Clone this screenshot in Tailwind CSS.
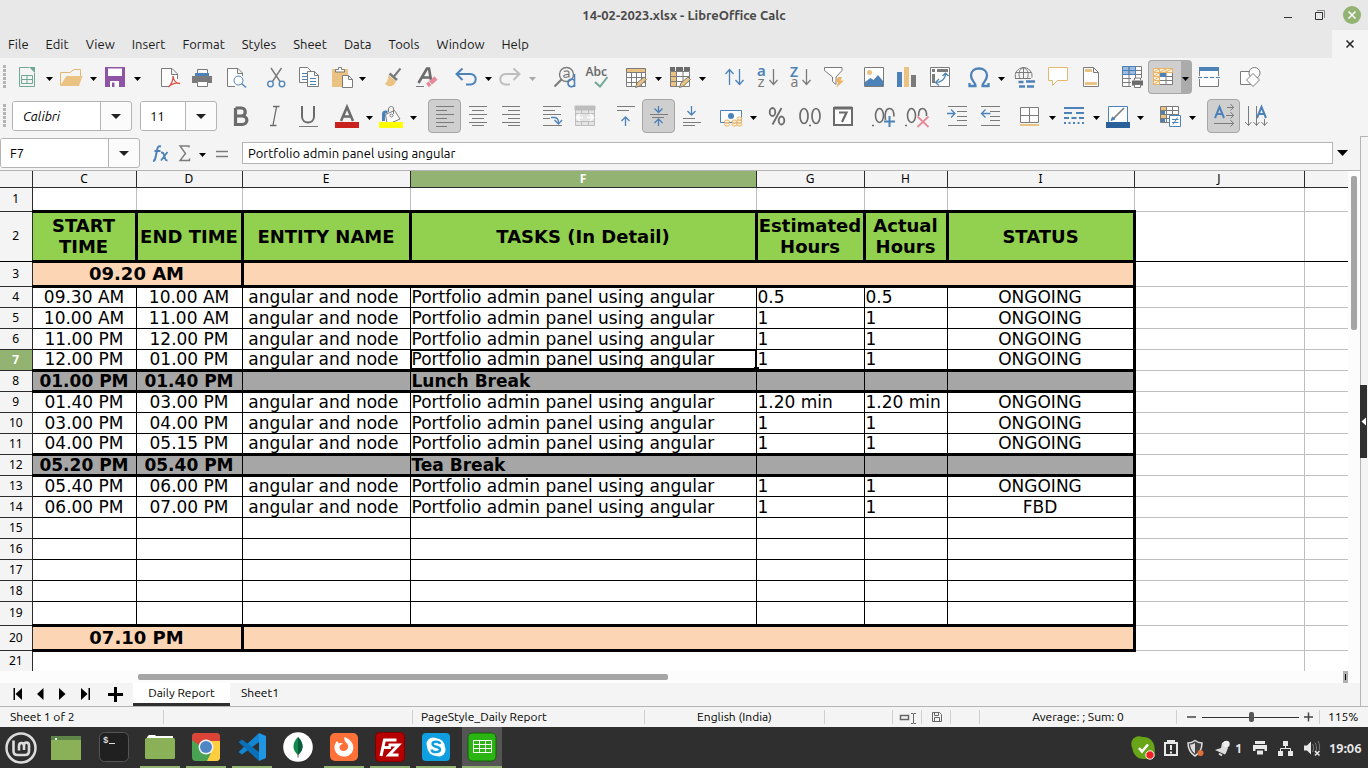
<!DOCTYPE html>
<html lang="en">
<head>
<meta charset="utf-8">
<title>14-02-2023.xlsx - LibreOffice Calc</title>
<script src="https://cdn.jsdelivr.net/npm/@tailwindcss/browser@4"></script>
</head>
<body class="flex h-screen flex-col overflow-hidden bg-[#f4f4f4] font-['Ubuntu','Noto_Sans',sans-serif] text-[12px] leading-4 text-[#1a1a1a]">
<svg class="hidden"><symbol id="dd" viewBox="0 0 11 34"><path d="M1 17H8L4.5 21Z" fill="#000" stroke="none"/></symbol></svg>

<header class="flex h-[30px] shrink-0 items-center bg-[#e8e8e8]">
  <div class="w-[90px]"></div>
  <h1 class="flex-1 text-center text-[13px] font-semibold text-[#4a4a4a]">14-02-2023.xlsx - LibreOffice Calc</h1>
  <div class="flex w-[90px] items-center">
    <button aria-label="Minimize" class="h-[30px] w-8"><svg class="h-[30px] w-8" viewBox="1278 0 32 30"><path d="M1284 17.500h8" stroke="#333"/></svg></button>
    <button aria-label="Restore" class="h-[30px] w-7"><svg class="h-[30px] w-7" viewBox="1310 0 28 30" fill="none"><path d="M1315.500 12.500h7v7h-7z" stroke="#333"/><path d="M1317 10.500h7.500v7.500" stroke="#888"/></svg></button>
    <button aria-label="Close" class="h-[30px] w-[30px]"><svg class="h-[30px] w-[30px]" viewBox="1338 0 30 30"><circle cx="1352" cy="15" r="9" fill="#92b372"/><path d="M1348.500 11.500l7 7m0-7l-7 7" stroke="#fff" stroke-width="1.500"/></svg></button>
  </div>
</header>

<nav class="flex h-7 shrink-0 items-center justify-between bg-[#e8e8e8]">
  <div class="flex gap-[17px] pl-2 text-[13px]">
    <button>File</button><button>Edit</button><button>View</button><button>Insert</button><button>Format</button><button>Styles</button><button>Sheet</button><button>Data</button><button>Tools</button><button>Window</button><button>Help</button>
  </div>
  <button aria-label="Close document" class="h-7 w-9 bg-[#f4f4f4]"><svg class="h-7 w-9" viewBox="1332 30 36 28"><path d="M1346.500 40.500l7 7m0-7l-7 7" stroke="#222" stroke-width="1.500"/></svg></button>
</nav>

<div role="toolbar" aria-label="Standard" class="flex h-[38px] shrink-0 items-start fill-none stroke-[#7b7b7b] pt-0.5 [&_button]:h-[34px] [&_button]:shrink-0 [&_svg]:h-[34px] [&_svg]:w-full">
  <div class="h-[34px] w-3 shrink-0"><svg viewBox="0 60 12 34"><path d="M4.500 65v23" stroke="#b5b5b5" stroke-width="3" stroke-dasharray="3 1"/></svg></div>
  <button aria-label="New" class="w-[33px]"><svg viewBox="12 60 33 34"><path d="M29 67.500H19.500V86.500H34.500V73M21.500 75.500h11v8h-11zM21.500 79.500h11M27 75.500v8" stroke="#6fa893"/><path d="M29 67h6v6z" fill="#6fa893" stroke="none"/></svg></button>
  <button aria-label="New options" class="w-[11px]"><svg><use href="#dd"/></svg></button>
  <button aria-label="Open" class="w-[33px]"><svg viewBox="56 60 33 34"><path d="M60.500 85V72.500H70L74 69.500H80.500V76" stroke="#e5b870"/><path d="M60 86L66.500 76H82.500L79 86z" fill="#eac282" stroke="none"/></svg></button>
  <button aria-label="Open options" class="w-[11px]"><svg><use href="#dd"/></svg></button>
  <button aria-label="Save" class="w-[33px]"><svg viewBox="100 60 33 34" stroke="none"><path d="M105 67h20v20h-20z" fill="#8e55a5"/><path d="M108 68.500h14V76h-14zM110 81h9v6h-9z" fill="#fff"/><path d="M112 82.500h2.500v4.500h-2.500z" fill="#8e55a5"/></svg></button>
  <button aria-label="Save options" class="w-[11px]"><svg><use href="#dd"/></svg></button>
  <div class="w-2 shrink-0"></div>
  <button aria-label="Export as PDF" class="w-[33px]"><svg viewBox="152 60 33 34"><path d="M170 86.500H161.500V68.500H172L177.500 74V79M171.500 68.500V74.500H177" fill="#fdfdfd"/><path d="M168.500 87C171 85 173.500 80 173 76C173.500 80 176 83.500 180 83.500C176 82.500 172 83.500 168.500 87z" stroke="#d9534a" stroke-width="1.300"/></svg></button>
  <button aria-label="Print" class="w-[33px]"><svg viewBox="185 60 33 34"><path d="M192 76h20v7h-20z" fill="#7b7b7b" stroke="none"/><path d="M197.500 69.500h10V75" fill="#fff"/><path d="M197.500 69.500V75" /><path d="M195 73h14v3h-14z" fill="#4d82b8" stroke="none"/><path d="M197.500 81.500h10v5h-10z" fill="#fff"/></svg></button>
  <button aria-label="Print preview" class="w-[33px]"><svg viewBox="218 60 33 34"><path d="M235 86.500H227.500V68.500H238L242.500 73V76M237.500 68.500V73.500H242" fill="#fdfdfd"/><circle cx="238.500" cy="80.500" r="4.500" stroke="#4d82b8" fill="#fdfdfd"/><path d="M241.500 83.500L246 87.500" stroke="#4d82b8" stroke-width="1.300"/></svg></button>
  <div class="w-2 shrink-0"></div>
  <button aria-label="Cut" class="w-[33px]"><svg viewBox="259 60 33 34"><path d="M271 68L280 81.500M281.500 68L272.500 81.500" stroke-width="1.400"/><g stroke="#4d82b8" stroke-width="1.300"><circle cx="270.500" cy="84" r="2.800"/><circle cx="282" cy="84" r="2.800"/></g></svg></button>
  <button aria-label="Copy" class="w-[33px]"><svg viewBox="292 60 33 34"><path d="M299.500 67.500h8l4 4V82.500h-12z" fill="#fdfdfd"/><path d="M302 73.500h5M302 76.500h5M302 79.500h5" stroke="#4d82b8"/><path d="M307.500 71.500h7l4 4V86.500h-11z" fill="#fdfdfd"/><path d="M314.500 71.500v4h4"/><path d="M310 78.500h6M310 81.500h6M310 84.500h6" stroke="#4d82b8"/></svg></button>
  <button aria-label="Paste" class="w-[33px]"><svg viewBox="325 60 33 34"><path d="M332 69h16v18h-16z" fill="#eac282" stroke="none"/><path d="M335.500 72v-2.500h3v-2h3v2h3V72z" fill="#fdfdfd"/><path d="M342.500 75.500h6l4 4v8h-10z" fill="#fdfdfd"/><path d="M348.500 75.500v4h4"/></svg></button>
  <button aria-label="Paste options" class="w-[11px]"><svg><use href="#dd"/></svg></button>
  <div class="w-2 shrink-0"></div>
  <button aria-label="Clone formatting" class="w-[33px]"><svg viewBox="377 60 33 34"><path d="M400.500 68.500L393.500 77" stroke-width="2"/><path d="M389.500 73.500L397 80" stroke-width="2.500"/><path d="M388.500 75L396 81.500C394.500 85 392 87 388 86L385 84C387 82 388.500 79 388.500 75z" fill="#eac282" stroke="none"/></svg></button>
  <button aria-label="Clear formatting" class="w-[33px]"><svg viewBox="410 60 33 34"><path d="M418.500 83L427 68.500H429L431 80M422 77.500H430" stroke-width="2.600" stroke="#6b6b6b"/><path d="M416 86.500h8"/><path d="M427.500 85.500L436 78" stroke="#e68a9a" stroke-width="4.500"/><path d="M429 81.500L432 85.500" stroke="#f4f4f4"/></svg></button>
  <div class="w-2 shrink-0"></div>
  <button aria-label="Undo" class="w-[33px]"><svg viewBox="451 60 33 34"><path d="M462.500 68.500L456.500 74L462.500 80M456.500 74H470.500A5.200 5.200 0 0 1 470.500 84.500H466" stroke="#4d82b8" stroke-width="1.900"/></svg></button>
  <button aria-label="Undo options" class="w-[11px]"><svg><use href="#dd"/></svg></button>
  <button aria-label="Redo" class="w-[33px]"><svg viewBox="495 60 33 34"><path d="M513.500 68.500L519.500 74L513.500 80M519.500 74H505.500A5.200 5.200 0 0 0 505.500 84.500H510" stroke="#bdbdbd" stroke-width="1.900"/></svg></button>
  <button aria-label="Redo options" class="w-[11px] opacity-30"><svg><use href="#dd"/></svg></button>
  <div class="w-2 shrink-0"></div>
  <button aria-label="Find and replace" class="w-[33px]"><svg viewBox="547 60 33 34"><circle cx="566.500" cy="74.500" r="7" stroke-width="1.400"/><path d="M561.500 79.500L554.500 86.500" stroke-width="2.200"/><path d="M564 72c1-1.500 5-2 5 1v4.500M569 74.500c-6 -.5-6.500 3-3.500 3 2 0 3.500-1.500 3.500-2.500" stroke-width="1.200"/><path d="M574.500 74V87M574.500 80.500c-1.500-2-6.500-2-6.500 2.500s5 4.500 6.500 2" stroke="#4d82b8" stroke-width="1.600"/></svg></button>
  <button aria-label="Spelling" class="w-[33px]"><svg viewBox="580 60 33 34"><text x="585.500" y="76" font-size="12" font-weight="600" fill="#6b6b6b" stroke="none" font-family="Noto Sans">Abc</text><path d="M595 82L600 86.500L607.500 77" stroke="#6fa893" stroke-width="2"/></svg></button>
  <div class="w-2 shrink-0"></div>
  <button aria-label="Row" class="w-[33px]"><svg viewBox="621 60 33 34"><path d="M626.500 72.500h19v14h-19zM626.500 77.500h19M626.500 82.500h19M631.500 72v14M636.500 72v14M641.500 72v14" fill="#fdfdfd"/><path d="M626.500 68.500h19v4h-19z" fill="#eac282"/><path d="M635.500 87.500l1.500-4.500 7-6 2.500 2.500-7 6.500z" fill="#eac282"/></svg></button>
  <button aria-label="Row options" class="w-[11px]"><svg><use href="#dd"/></svg></button>
  <button aria-label="Column" class="w-[33px]"><svg viewBox="665 60 33 34"><path d="M670.500 71.500h19v15h-19zM676.500 76.500h13M676.500 81.500h13M683 72v14" fill="#fdfdfd"/><path d="M670.500 71.500h6v15h-6zM670.500 76.500h6M670.500 81.500h6" fill="#eac282"/><path d="M670 67h5v4h-5zM676 67h7v4h-7zM684 67h6v4h-6z" fill="#6b6b6b" stroke="none"/><path d="M679.500 87.500l1.500-4.500 7-6 2.500 2.500-7 6.500z" fill="#eac282"/></svg></button>
  <button aria-label="Column options" class="w-[11px]"><svg><use href="#dd"/></svg></button>
  <div class="w-2 shrink-0"></div>
  <button aria-label="Sort" class="w-[33px]"><svg viewBox="717 60 33 34" stroke="#4d82b8" stroke-width="1.300"><path d="M729.500 85V69.500M725.500 74l4-4.500 4 4.500M739.500 69v15.500M735.500 80l4 4.500 4-4.500"/></svg></button>
  <button aria-label="Sort ascending" class="w-[33px]"><svg viewBox="750 60 33 34"><path d="M773.500 69v15.500M769.500 80l4 4.500 4-4.500" stroke-width="1.300"/><g font-family="Noto Sans" stroke="none" font-size="15"><text x="757" y="76" font-weight="600" fill="#4d82b8">a</text><text x="757.500" y="87" fill="#7b7b7b">z</text></g></svg></button>
  <button aria-label="Sort descending" class="w-[33px]"><svg viewBox="783 60 33 34"><path d="M806.500 69v15.500M802.500 80l4 4.500 4-4.500" stroke-width="1.300"/><g font-family="Noto Sans" stroke="none" font-size="14"><text x="790" y="77" font-weight="600" fill="#4d82b8">Z</text><text x="790.500" y="87" fill="#7b7b7b">a</text></g></svg></button>
  <button aria-label="AutoFilter" class="w-[33px]"><svg viewBox="816 60 33 34"><path d="M824.500 67.500h17.500v3l-6 6.500v7.500l-3.500-3v-4.500l-8-6.500z" fill="#fdfdfd"/><path d="M838 77h4l-1.500 3.500h3.500l-7.500 7 1.500-5.500h-2.500z" fill="#eab366" stroke="none"/></svg></button>
  <div class="w-2 shrink-0"></div>
  <button aria-label="Image" class="w-[33px]"><svg viewBox="857 60 33 34"><path d="M864.500 67.500h19v19h-19z" fill="#fff"/><circle cx="869.500" cy="72.500" r="2.500" fill="#eac282" stroke="none"/><path d="M865 86v-4l5.500-4 3 2 4.500-5 5 6v5z" fill="#4d82b8" stroke="none"/></svg></button>
  <button aria-label="Chart" class="w-[33px]"><svg viewBox="890 60 33 34" stroke="none"><path d="M897 72h5v15h-5z" fill="#4d82b8"/><path d="M904 67h5v20h-5z" fill="#eac282"/><path d="M911 75h5v12h-5z" fill="#7b7b7b"/></svg></button>
  <button aria-label="Pivot table" class="w-[33px]"><svg viewBox="923 60 33 34"><path d="M930.500 67.500h19v19h-19z" fill="#fdfdfd"/><path d="M932 69h3v3h-3zM937 69h11v3h-11zM932 74h3v9h-3z" fill="#7b7b7b" stroke="none"/><path d="M936 82.500C941 82.500 945.500 79 945.500 73.500M939 79l-3.500 3.500 3.500 3M942.500 76l3-3 3 3" stroke="#4d82b8" stroke-width="1.200"/></svg></button>
  <div class="w-2 shrink-0"></div>
  <button aria-label="Special character" class="w-[33px]"><svg viewBox="964 60 33 34"><path d="M969.500 83V86H975.500C975.500 82 971 81 971 75.500C971 71 974.500 68.500 979 68.500S987 71 987 75.500C987 81 982.500 82 982.500 86H988.500V83" stroke="#4d82b8" stroke-width="2.300"/></svg></button>
  <button aria-label="Special character options" class="w-[11px]"><svg><use href="#dd"/></svg></button>
  <button aria-label="Hyperlink" class="w-[33px]"><svg viewBox="1008 60 33 34"><path d="M1018 78.500H1015.500A8.500 8.500 0 1 1 1032 77.500M1023.500 67.500v11M1015.500 72.500h16M1020 78.500c-2-5-1-9 3.500-11c4.500 2 5.500 6 4 10.500M1015 78.500h16"/><path d="M1018.500 82h5M1019 86.500h6M1026 81.500h9M1027 86.500h7" stroke="#4d82b8" stroke-width="2.500"/></svg></button>
  <button aria-label="Comment" class="w-[33px]"><svg viewBox="1041 60 33 34"><path d="M1048.500 67.500h19v13h-10l-5 5v-5h-4z" fill="#fff" stroke="#e5b870"/></svg></button>
  <button aria-label="Headers and footers" class="w-[33px]"><svg viewBox="1074 60 33 34"><path d="M1083.500 67.500h10l5 5v14h-15zM1093.500 67.500v5h5" fill="#fdfdfd"/><path d="M1085 69h7v3h-7zM1085 82h12v3h-12z" fill="#eac282" stroke="none"/></svg></button>
  <div class="w-2 shrink-0"></div>
  <button aria-label="Print area" class="w-[33px]"><svg viewBox="1115 60 33 34"><path d="M1122.500 66.500h19v20h-19z" fill="#fff"/><path d="M1123 67h12v7h-12z" fill="#9dbbe0" stroke="none"/><path d="M1122.500 70.500h19M1122.500 74.500h19M1122.500 78.500h19M1122.500 82.500h19M1129 66v20M1135.500 66v20"/><path d="M1122.500 66.500h13v8h-13zM1122.500 70.500h13M1129 66v8" stroke="#4d82b8"/><path d="M1131 78h13v10h-13z" fill="#f4f4f4" stroke="none"/><path d="M1132 80.500h11v5h-11z" fill="#6b6b6b" stroke="none"/><path d="M1134.500 80v-2h6v2M1134.500 84.500h6v3h-6z" fill="#fff"/></svg></button>
  <button aria-label="Freeze rows and columns" class="w-[33px] rounded-l-sm border border-r-0 border-[#a6a6a6] bg-[#cfcfcf]"><svg class="-mt-px" viewBox="1149 60 32 34"><path d="M1153.500 68.500h19v16h-19z" fill="#fff"/><path d="M1159.500 72.500h13M1159.500 76.500h13M1159.500 80.500h13M1166 72v12"/><path d="M1153.500 68.500h19v4h-13v12h-6zM1153.500 72.500h6M1153.500 76.500h6M1153.500 80.500h6M1159.500 68.500v4M1166 68.500v4M1153.500 72l6-3M1160 72l6-3M1166 72l6-3M1154 76l5-3M1154 80l5-3M1154 84l5-3" fill="#fdf2dc" stroke="#eab366"/><path d="M1160 73h6v4h-6z" fill="#4d82b8" stroke="none"/></svg></button>
  <button aria-label="Freeze options" class="w-[11px] rounded-r-sm bg-[#ababab]"><svg><use href="#dd"/></svg></button>
  <button aria-label="Split window" class="w-[33px]"><svg viewBox="1192 60 33 34"><path d="M1199.500 67.500h19v19h-19z" fill="#fdfdfd"/><path d="M1199 67h20v4h-20z" fill="#4d82b8" stroke="none"/><path d="M1198 77.500h22" stroke="#f4f4f4" stroke-width="3"/><path d="M1198 77.500h22" stroke="#4d82b8" stroke-dasharray="4 2"/></svg></button>
  <div class="w-2 shrink-0"></div>
  <button aria-label="Draw functions" class="w-[33px]"><svg viewBox="1233 60 33 34"><path d="M1240.500 71.500h10v13h-10z" fill="#fdfdfd"/><circle cx="1254.500" cy="73" r="5.500" fill="#fdfdfd"/><path d="M1253 73.500l6.500 6.500-6.500 6.500-6.500-6.500z" fill="#fdfdfd"/></svg></button>
</div>

<div role="toolbar" aria-label="Formatting" class="flex h-10 shrink-0 items-start fill-none stroke-[#7b7b7b] pt-[3px] [&_svg]:h-[34px] [&_svg]:w-full">
  <div class="h-[34px] w-3 shrink-0"><svg viewBox="0 99 12 34"><path d="M4.500 104v23" stroke="#b5b5b5" stroke-width="3" stroke-dasharray="3 1"/></svg></div>
  <div class="mt-0.5 flex h-[30px] w-[120px] shrink-0 overflow-hidden rounded-[3px] border border-[#b4b4b4] bg-[#fbfbfb]">
    <input aria-label="Font name" value="Calibri" class="w-[88px] border-r border-[#b4b4b4] bg-white pl-2.5 text-[13px] italic text-black outline-none">
    <button aria-label="Font list" class="flex h-7 flex-1 items-center justify-center"><svg viewBox="0 0 30 34"><path d="M10 15h10l-5 5z" fill="#222" stroke="none"/></svg></button>
  </div>
  <div class="mt-0.5 ml-2 flex h-[30px] w-[77px] shrink-0 overflow-hidden rounded-[3px] border border-[#b4b4b4] bg-[#fbfbfb]">
    <input aria-label="Font size" value="11" class="w-[45px] border-r border-[#b4b4b4] bg-white pl-[9px] text-[13px] text-black outline-none">
    <button aria-label="Size list" class="flex h-7 flex-1 items-center justify-center"><svg viewBox="0 0 30 34"><path d="M10 15h10l-5 5z" fill="#222" stroke="none"/></svg></button>
  </div>
  <div class="flex pl-2 [&_button]:h-[34px] [&_button]:shrink-0">
  <button aria-label="Bold" class="w-[33px]"><svg viewBox="225 99 33 34"><path d="M235.500 108H241.500C246.500 108 246.500 116 241.500 116H236M236 116H242C248.500 116 248.500 124.500 242 124.500H235.500V108" stroke="#6b6b6b" stroke-width="3.200"/></svg></button>
  <button aria-label="Italic" class="w-[33px]"><svg viewBox="258 99 33 34"><path d="M273 106.500h6.500M270 125.500h6.500M276.500 107L273 125" stroke="#6b6b6b" stroke-width="1.300"/></svg></button>
  <button aria-label="Underline" class="w-[33px]"><svg viewBox="291 99 33 34"><path d="M302 106V116.500C302 124.500 314 124.500 314 116.500V106" stroke="#6b6b6b" stroke-width="2"/><path d="M299 126.500h19" /></svg></button>
  <div class="w-2 shrink-0"></div>
  <button aria-label="Font color" class="w-[33px]"><svg viewBox="332 99 33 34"><path d="M341 121L347 107L353 121M343 116.500h8" stroke="#6b6b6b" stroke-width="2.500"/><path d="M335 122h24v6h-24z" fill="#c9211e" stroke="none"/></svg></button>
  <button aria-label="Font color options" class="w-[11px]"><svg><use href="#dd"/></svg></button>
  <button aria-label="Background color" class="w-[33px]"><svg viewBox="376 99 33 34"><path d="M388.500 112v-3c0-3 5-3.500 5-.5v6"/><path d="M383.500 121v-7.500c0-2 2-1.500 4-1.500" stroke="#4d82b8" stroke-width="3"/><path d="M385.500 114.500l9-4 5.500 8.500-9 4h-4z" fill="#fdfdfd"/><path d="M393.500 108v6"/><circle cx="391.500" cy="115.500" r="1.500"/><path d="M379 122h24v6h-24z" fill="#ff0" stroke="none"/></svg></button>
  <button aria-label="Background color options" class="w-[11px]"><svg><use href="#dd"/></svg></button>
  <div class="w-2 shrink-0"></div>
  <button aria-label="Align left" class="w-[33px] rounded-sm border border-[#a6a6a6] bg-[#cfcfcf]"><svg class="-mt-px" viewBox="429 99 31 34"><path d="M436 106.500h18M436 110.500h11M436 114.500h18M436 118.500h11M436 122.500h18M436 126.500h11"/></svg></button>
  <button aria-label="Align center" class="w-[33px]"><svg viewBox="461 99 33 34"><path d="M469 106.500h18M472 110.500h12M469 114.500h18M472 118.500h12M469 122.500h18M472 125.500h12"/></svg></button>
  <button aria-label="Align right" class="w-[33px]"><svg viewBox="494 99 33 34"><path d="M502 106.500h18M508 110.500h12M502 114.500h18M508 118.500h12M502 122.500h18M508 125.500h12"/></svg></button>
  <div class="w-2 shrink-0"></div>
  <button aria-label="Wrap text" class="w-[33px]"><svg viewBox="535 99 33 34"><path d="M543 106.500h18M543 110.500h12M543 114.500h18M543 118.500h7M543 125.500h19"/><path d="M551 117.500h3c3 0 4.500 2 4.500 5M554.500 120l4 4 3.500-4" stroke="#4d82b8" stroke-width="1.300"/></svg></button>
  <button aria-label="Merge cells" class="w-[33px]"><svg viewBox="568 99 33 34" stroke="#bdbdbd"><path d="M575.500 106.500h19v19h-19z" fill="#e4e4e4"/><path d="M575 106h20v4h-20z" fill="#bdbdbd"/><path d="M575.500 113.500h19M575.500 121.500h19M581.500 110v4M588.500 110v4M581.500 121v4M588.500 121v4"/><path d="M583 117.500h-6M580 114l-3.500 3.500 3.500 3.500M587 117.500h6M590 114l3.500 3.500-3.500 3.500" stroke="#fff" stroke-width="1.500"/></svg></button>
  <div class="w-2 shrink-0"></div>
  <button aria-label="Align top" class="w-[33px]"><svg viewBox="609 99 33 34"><path d="M617 106.500h18M617 110.500h12"/><path d="M625.500 126v-9M621.500 121l4-4 4 4" stroke="#4d82b8" stroke-width="1.300"/></svg></button>
  <button aria-label="Center vertically" class="w-[33px] rounded-sm border border-[#a6a6a6] bg-[#cfcfcf]"><svg class="-mt-px" viewBox="643 99 31 34"><path d="M650 114.500h18M652 117.500h12"/><path d="M658.500 106v6M654.500 108.500l4 4 4-4M658.500 126v-7M654.500 123l4-4 4 4" stroke="#4d82b8" stroke-width="1.300"/></svg></button>
  <button aria-label="Align bottom" class="w-[33px]"><svg viewBox="675 99 33 34"><path d="M683 118.500h12M683 122.500h18M683 125.500h12"/><path d="M691.500 106v9M687.500 111l4 4 4-4" stroke="#4d82b8" stroke-width="1.300"/></svg></button>
  <div class="w-2 shrink-0"></div>
  <button aria-label="Currency" class="w-[33px]"><svg viewBox="716 99 33 34"><path d="M720.500 110.500h21v12h-21z" fill="#fdfdfd" stroke="#4d82b8"/><circle cx="731" cy="116" r="3" fill="#4d82b8" stroke="none"/><g stroke="#eab366" fill="#fdf2dc"><ellipse cx="727" cy="121.500" rx="2.500" ry="1.500"/><ellipse cx="727" cy="124.500" rx="2.500" ry="1.500"/><ellipse cx="734.500" cy="124.500" rx="2.500" ry="1.500"/><ellipse cx="734.500" cy="121.500" rx="2.500" ry="1.500"/><ellipse cx="739.500" cy="124.500" rx="2.500" ry="1.500"/><ellipse cx="739.500" cy="121.500" rx="2.500" ry="1.500"/><ellipse cx="739.500" cy="118.500" rx="2.500" ry="1.500"/></g></svg></button>
  <button aria-label="Currency options" class="w-[11px]"><svg><use href="#dd"/></svg></button>
  <button aria-label="Percent" class="w-[33px]"><svg viewBox="760 99 33 34" stroke="#6b6b6b" stroke-width="1.800"><ellipse cx="772.500" cy="112" rx="2.800" ry="4"/><ellipse cx="781.500" cy="120.500" rx="2.800" ry="4"/><path d="M781.500 108L772.500 124.500"/></svg></button>
  <button aria-label="Number" class="w-[33px]"><svg viewBox="793 99 33 34" stroke="#6b6b6b" stroke-width="1.700"><ellipse cx="804" cy="116" rx="4" ry="7.500"/><ellipse cx="816" cy="116" rx="4" ry="7.500"/><path d="M809 125.500h2"/></svg></button>
  <button aria-label="Date" class="w-[33px]"><svg viewBox="826 99 33 34" stroke="#6b6b6b" stroke-width="2"><path d="M834 108h18v17h-18z" fill="#fdfdfd"/><path d="M834 108h18" stroke-width="3"/><path d="M839 112.500h7.500l-4.500 9.500" stroke-width="2.200"/></svg></button>
  <div class="w-2 shrink-0"></div>
  <button aria-label="Add decimal place" class="w-[33px]"><svg viewBox="867 99 33 34" stroke="#6b6b6b" stroke-width="1.600"><path d="M872 125.500h2"/><ellipse cx="879.500" cy="115.500" rx="4" ry="7"/><path d="M885.500 120c-1-6 0-11.500 4-11.500s4.500 4 4.500 8"/><path d="M884 121.500h11M889.500 116v11" stroke="#4d82b8" stroke-width="2"/></svg></button>
  <button aria-label="Delete decimal place" class="w-[33px]"><svg viewBox="900 99 33 34" stroke="#6b6b6b" stroke-width="1.600"><path d="M905 125.500h2"/><ellipse cx="911.500" cy="115.500" rx="4" ry="7"/><path d="M918.500 116c0-4 1-7.500 4-7.500s4.500 4 4 7.500"/><path d="M917.500 116.500l11 10.500M928.500 116.500l-11 10.500" stroke="#e68a9a" stroke-width="1.800"/></svg></button>
  <div class="w-2 shrink-0"></div>
  <button aria-label="Increase indent" class="w-[33px]"><svg viewBox="941 99 33 34"><path d="M948 106.500h19M957 111.500h10M957 116.500h10M957 120.500h10M948 125.500h19"/><path d="M947 113.500h8M951 109.500l4 4-4 4" stroke="#4d82b8" stroke-width="1.300"/></svg></button>
  <button aria-label="Decrease indent" class="w-[33px]"><svg viewBox="974 99 33 34"><path d="M981 106.500h19M990 111.500h10M990 116.500h10M990 120.500h10M981 125.500h19"/><path d="M981.500 113.500h9M985.500 109.500l-4 4 4 4" stroke="#4d82b8" stroke-width="1.300"/></svg></button>
  <div class="w-2 shrink-0"></div>
  <button aria-label="Borders" class="w-[33px]"><svg viewBox="1015 99 33 34"><path d="M1020.500 107.500h18v15h-18zM1020.500 115.500h18M1029.500 107.500v15" fill="#fdfdfd"/><path d="M1020 125h19" stroke="#eac282" stroke-width="2"/></svg></button>
  <button aria-label="Border options" class="w-[11px]"><svg><use href="#dd"/></svg></button>
  <button aria-label="Border style" class="w-[33px]"><svg viewBox="1059 99 33 34" stroke="#4d82b8" stroke-width="2"><path d="M1064 108h20"/><path d="M1064 113h20" stroke-dasharray="8 4"/><path d="M1064 118h20" stroke-dasharray="5 2.500"/><path d="M1064 123h20" stroke-dasharray="2 2.500"/></svg></button>
  <button aria-label="Border style options" class="w-[11px]"><svg><use href="#dd"/></svg></button>
  <button aria-label="Border color" class="w-[33px]"><svg viewBox="1103 99 33 34"><path d="M1108.500 106.500h19v16h-19z" fill="#fdfdfd" stroke="#4d82b8"/><path d="M1111 120.500l4-1.500-2.500-2z" fill="#4d82b8" stroke="#4d82b8"/><path d="M1114 118L1124 108" stroke-width="1.600"/><path d="M1106 122h24v6h-24z" fill="#2a6099" stroke="none"/></svg></button>
  <button aria-label="Border color options" class="w-[11px]"><svg><use href="#dd"/></svg></button>
  <div class="w-2 shrink-0"></div>
  <button aria-label="Conditional formatting" class="w-[33px]"><svg viewBox="1155 99 33 34"><path d="M1160.500 106.500h18v16h-18zM1160.500 110.500h18M1160.500 114.500h18M1160.500 118.500h18M1166.500 106v16M1172.500 106v16" fill="#fdfdfd"/><path d="M1161 107h5v3h-5zM1161 115h5v3h-5z" fill="#eac282" stroke="none"/><path d="M1161 111h4v3h-4zM1161 119h4v3h-4z" fill="#4d82b8" stroke="none"/><path d="M1169.500 115.500h11v11h-11z" fill="#fff" stroke="#4d82b8"/><path d="M1172 119.500h6.500M1172 122.500h6.500M1177.500 117.500l-4.500 7" stroke="#4d82b8"/></svg></button>
  <button aria-label="Conditional options" class="w-[11px]"><svg><use href="#dd"/></svg></button>
  <div class="w-2 shrink-0"></div>
  <button aria-label="Text left to right" class="w-[33px] rounded-sm border border-[#a6a6a6] bg-[#cfcfcf]"><svg class="-mt-px" viewBox="1208 99 31 34"><path d="M1215 118L1219.500 107L1224 118M1216.500 114h6" stroke="#4d82b8" stroke-width="2"/><path d="M1227 107.500h6.500M1230.500 104l3 3.500-3 3M1226 115.500h7.500M1230.500 112l3 3.500-3 3M1214 123.500h19.500M1230.500 120l3 3.500-3 3"/></svg></button>
  <button aria-label="Text top to bottom" class="w-[33px]"><svg viewBox="1240 99 33 34"><path d="M1257 118L1261.500 107L1266 118M1258.500 114h6" stroke="#4d82b8" stroke-width="2"/><path d="M1248.500 106v19.500M1245 122l3.500 3.500 3-3.500M1256.500 106v19.500M1253.500 122l3 3.500 3-3.500M1264.500 119v6.500M1261.500 122l3 3.500 3-3.500"/></svg></button>
  </div>
</div>

<main class="flex min-h-0 flex-1">
  <section class="flex min-w-0 flex-1 flex-col">
    <div class="flex h-[34px] shrink-0 items-center">
      <div class="flex h-[30px] w-[140px] shrink-0 overflow-hidden rounded-[3px] border border-[#b4b4b4] bg-[#fbfbfb]">
        <input aria-label="Name box" value="F7" class="w-[108px] border-r border-[#b4b4b4] bg-white pl-[9px] text-[13px] text-black outline-none">
        <button aria-label="Name list" class="flex-1"><svg class="h-7 w-full" viewBox="0 0 30 28"><path d="M10 12h10l-5 5z" fill="#222"/></svg></button>
      </div>
      <button aria-label="Function wizard" class="ml-2 w-6"><svg class="h-[34px] w-6" viewBox="148 136 24 34" fill="none" stroke="#4d82b8" stroke-width="2"><path d="M161 146.500c-3-1-3.500 1-4 4l-1.500 7c-.5 2.500-1 3.500-2.500 3.500M154.500 151h6"/><path d="M161 152.500c2 0 2.500 0 3.500 4s1.500 4 3 4M167.500 152l-6.500 8.500" stroke-width="1.800"/></svg></button>
      <button aria-label="Select function" class="w-9"><svg class="h-[34px] w-9" viewBox="172 136 36 34"><path d="M189 147.500V146H180l5.500 7.500-5.500 7h9.500V158.500" fill="none" stroke="#7b7b7b" stroke-width="1.400"/><path d="M199 153h7l-3.500 4z"/></svg></button>
      <button aria-label="Formula" class="w-7"><svg class="h-[34px] w-7" viewBox="208 136 28 34"><path d="M216 151.500h12M216 156.500h12" stroke="#7b7b7b" stroke-width="1.500"/></svg></button>
      <input aria-label="Input line" value="Portfolio admin panel using angular" class="ml-1.5 h-[22px] min-w-0 flex-1 border border-[#b4b4b4] bg-white pl-[5px] text-[13px] text-black outline-none">
      <button aria-label="Expand formula bar" class="w-[27px]"><svg class="h-[34px] w-[27px]" viewBox="1333 136 27 34"><path d="M1337 150h11l-5.500 6z"/></svg></button>
    </div>
    <div class="flex min-h-0 flex-1 border-t border-[#b4b4b4]">
      <div class="min-w-0 flex-1 overflow-hidden bg-white">
        <table class="w-full table-fixed border-collapse font-['DejaVu_Sans',sans-serif] text-[17px] leading-[18px] text-black">
          <colgroup><col class="w-[32px]"><col class="w-[104px]"><col class="w-[106px]"><col class="w-[168px]"><col class="w-[346px]"><col class="w-[108px]"><col class="w-[83px]"><col class="w-[187px]"><col class="w-[170px]"><col></colgroup>
          <thead id="cols"></thead>
          <tbody id="rows"></tbody>
        </table>
      </div>
      <div class="w-3 shrink-0 bg-[#fcfcfc] pt-[5px] pl-[3px]"><div class="h-[154px] w-1.5 rounded-[2px] bg-[#a5a5a5]"></div></div>
    </div>
    <div class="flex h-3 shrink-0 items-center justify-between bg-[#fcfcfc] pr-3 pl-[138px]">
      <div class="h-1.5 w-[530px] rounded-[2px] bg-[#a5a5a5]"></div>
      <div class="flex h-3 w-[5px] items-center justify-center bg-[#b0b0b0]"><div class="h-1.5 w-px bg-black"></div></div>
    </div>
    <div class="flex h-[23px] shrink-0 items-stretch">
      <button aria-label="First sheet" class="w-7"><svg class="h-[23px] w-7" viewBox="0 683 28 23"><path d="M13.500 688h1.500v12h-1.500zM22 688v12l-6.500-6z"/></svg></button>
      <button aria-label="Previous sheet" class="w-[22px]"><svg class="h-[23px] w-[22px]" viewBox="28 683 22 23"><path d="M43.500 688v12l-6.500-6z"/></svg></button>
      <button aria-label="Next sheet" class="w-[22px]"><svg class="h-[23px] w-[22px]" viewBox="50 683 22 23"><path d="M59 688v12l6.500-6z"/></svg></button>
      <button aria-label="Last sheet" class="w-6"><svg class="h-[23px] w-6" viewBox="72 683 24 23"><path d="M81 688v12l6.500-6zM88.500 688h1.500v12h-1.500z"/></svg></button>
      <button aria-label="Add sheet" class="w-[37px]"><svg class="h-[23px] w-[37px]" viewBox="96 683 37 23"><path d="M108 694.500h15M115.500 687v15" stroke="#000" stroke-width="3"/></svg></button>
      <button class="w-[97px] border-b-[3px] border-[#303030] bg-white text-[12px] text-black">Daily Report</button>
      <button class="w-[60px] border-b-[3px] border-transparent text-[12px] text-black">Sheet1</button>
    </div>
  </section>
  <aside class="flex w-2 shrink-0 flex-col justify-center border-t border-l border-[#b4b4b4] pb-px">
    <button aria-label="Show sidebar" class="-ml-px h-[73px] w-[7px] bg-[#303030]"><svg class="h-[73px] w-[7px]" viewBox="0 0 7 73"><path d="M6 32.500v8l-4.500-4z" fill="#fff"/></svg></button>
  </aside>
</main>

<footer class="flex h-[21px] shrink-0 items-center border-t border-[#b4b4b4] text-[12px] text-black [&>*]:h-[14px] [&>*]:shrink-0 [&>*]:border-[#d0d0d0] [&>*]:leading-[14px]">
  <div class="w-[164px] border-r pl-2.5">Sheet 1 of 2</div>
  <div class="w-[249px] border-r"></div>
  <div class="w-[232px] border-r pl-2">PageStyle_Daily Report</div>
  <div class="w-[180px] border-r text-center">English (India)</div>
  <div class="w-[68px] border-r"></div>
  <div class="w-[29px] border-r"><svg class="h-[14px] w-7" viewBox="893 710 28 14" fill="none" stroke="#666"><path d="M900.500 715.500h8v4h-8z" stroke-width="1.500"/><path d="M911 713.500h2l.5 .5 .5-.5h2M913.500 714v9M911 723.500h2l.5-.5.5.5h2"/></svg></div>
  <div class="w-[29px] border-r"><svg class="h-[14px] w-7" viewBox="922 710 28 14" fill="none" stroke="#666"><path d="M932.500 712.500h7l2 2v7h-9zM934.500 712.500v3h4v-3M934.500 721.500v-4h5v4"/></svg></div>
  <div class="w-[29px] border-r"></div>
  <div class="min-w-0 flex-1 border-r text-center">Average: ; Sum: 0</div>
  <div class="flex w-[143px] items-center border-r pl-[9px]">
    <button aria-label="Zoom out" class="w-4"><svg class="h-[14px] w-4" viewBox="0 0 16 14"><path d="M1 7h9" stroke="#444" stroke-width="1.500"/></svg></button>
    <input aria-label="Zoom" type="range" value="51" class="h-[14px] w-[97px] appearance-none bg-transparent [&::-webkit-slider-runnable-track]:h-px [&::-webkit-slider-runnable-track]:bg-[#333] [&::-webkit-slider-thumb]:-mt-[5px] [&::-webkit-slider-thumb]:h-[10px] [&::-webkit-slider-thumb]:w-[5px] [&::-webkit-slider-thumb]:appearance-none [&::-webkit-slider-thumb]:rounded-[2px] [&::-webkit-slider-thumb]:bg-[#555]">
    <button aria-label="Zoom in" class="w-5"><svg class="h-[14px] w-5" viewBox="0 0 20 14"><path d="M5 7h9M9.500 2.500v9" stroke="#444" stroke-width="1.500"/></svg></button>
  </div>
  <div class="w-12 pl-2">115%</div>
</footer>

<div class="flex h-[41px] shrink-0 bg-[#2f2f2f] text-[#e8e8e8]">
  <button aria-label="Menu" class="w-[46px]"><svg class="h-[41px] w-[46px]" viewBox="0 727 46 41" fill="none" stroke="#dcdcdc"><circle cx="21" cy="748" r="14.500" stroke-width="2.500"/><path d="M13.500 740.500v10.500c0 3 1.500 4 4 4h7.500c3 0 4-1.500 4-4v-5.500c0-4-5-4-5 0v4.500M24 746c0-4-5-4-5 0v4.500" stroke-width="2.600"/></svg></button>
  <button aria-label="Show desktop" class="w-10"><svg class="h-[41px] w-10" viewBox="46 727 40 41"><path d="M51 736h30v24h-30z" fill="#8bb158"/><path d="M51 736h30v4h-30z" fill="#5f8447"/><path d="M55 738h2v2h-2z" fill="#dfe"/></svg></button>
  <button aria-label="Terminal" class="ml-2 w-10"><svg class="h-[41px] w-10" viewBox="94 727 40 41"><rect x="99.500" y="732.500" width="29" height="29" rx="5" fill="#202020" stroke="#555"/><text x="103" y="743" font-size="9" font-weight="bold" fill="#ddd" font-family="Liberation Mono">$</text><path d="M109 743.500h6" stroke="#ddd"/></svg></button>
  <div class="ml-1.5 flex gap-1.5 [&>button]:w-10 [&>button]:border-b-2 [&>button]:border-transparent [&_svg]:h-[39px] [&_svg]:w-10">
    <button aria-label="Files" class="!border-[#92b372]"><svg viewBox="140 727 40 39"><path d="M147 737l2-2h6l1 1h17v6h-26z" fill="#fff"/><rect x="145" y="738" width="30" height="21" rx="1.500" fill="#8bb158"/></svg></button>
    <button aria-label="Chrome" class="!border-[#92b372]"><svg viewBox="186 727 40 39"><rect x="192" y="733" width="28" height="28" rx="4" fill="#4aa352"/><path d="M192 740v-3a4 4 0 0 1 4-4h20a4 4 0 0 1 4 4v4h-14l-7 4z" fill="#dc4437"/><path d="M220 741h-14l5 12-4 8h9a4 4 0 0 0 4-4z" fill="#ffcd40"/><circle cx="206" cy="747" r="7.500" fill="#f3f3f3"/><circle cx="206" cy="747" r="6" fill="#4f86c6"/></svg></button>
    <button aria-label="Visual Studio Code" class="!border-[#92b372]"><svg viewBox="232 727 40 39"><path d="M259 733l7 3v22l-7 3z" fill="#2196e3"/><path d="M259 733v9l-17 12.500-3.500-2.500z" fill="#1286d0"/><path d="M259 761v-9l-17-12.500-3.500 2.500z" fill="#0a70b8"/></svg></button>
    <button aria-label="MongoDB"><svg viewBox="278 727 40 39"><circle cx="298" cy="747" r="14.800" fill="#fff"/><path d="M298 737c7 7 5 14 0 18c-5-4-7-11 0-18z" fill="#128a4e"/><path d="M298 737c7 7 5 14 0 18z" fill="#0b5c3c"/><path d="M298 754v3.500" stroke="#555"/></svg></button>
    <button aria-label="Firefox" class="!border-[#92b372]"><svg viewBox="324 727 40 39"><rect x="330" y="733" width="28" height="28" rx="5" fill="#ff7139"/><path d="M344.500 737c7 3 10 8 8.500 13s-6 7-10 6.500c-6-.5-9-6-8.500-10.500c.5-2 1.500-4 2.500-5l2 2.500c2-.8 3-.5 4 .5c-2 0-3.500 1.500-3.500 3.500c0 3 3.500 4.500 6 3c4-2 3-6 .5-8c-1.500-1.500-2-3.500-1.500-5.500z" fill="#fff"/></svg></button>
    <button aria-label="FileZilla" class="!border-[#92b372]"><svg viewBox="370 727 40 39"><rect x="375.500" y="732.500" width="29" height="29" rx="4" fill="#b50000" stroke="#7c0000"/><path d="M381 756l3.500-16h12M383.500 747.500h7.500M388.500 745h10l-9.500 10h9.500" fill="none" stroke="#fff" stroke-width="3"/></svg></button>
    <button aria-label="Skype" class="!border-[#92b372]"><svg viewBox="416 727 40 39"><rect x="422" y="733" width="28" height="28" rx="4" fill="#0f9fe0"/><circle cx="433" cy="744" r="6.500" fill="#fff"/><circle cx="439" cy="750" r="6.500" fill="#fff"/><circle cx="436" cy="747" r="8.800" fill="#fff"/><path d="M440 744c-.5-3-7.500-3-7.500 0c0 3.500 7.500 2 7.500 5.500c0 3.500-8 3.500-8.500 0" fill="none" stroke="#0f9fe0" stroke-width="2.400"/></svg></button>
    <button aria-label="LibreOffice Calc" class="!border-[#92b372] bg-[#555]"><svg viewBox="462 727 40 39"><rect x="468" y="733" width="28" height="28" rx="4.500" fill="#2bb512" stroke="#12610a"/><path d="M473.500 740.500h18v12h-18zM473.500 744.500h18M473.500 748.500h18M479.500 740v12.500M485.500 740v12.500" fill="none" stroke="#fff"/></svg></button>
  </div>
  <div class="ml-auto flex items-center text-[13px] font-bold [&_svg]:h-[41px]">
    <button aria-label="Skype status"><svg class="w-[33px]" viewBox="1127 727 33 41"><circle cx="1139" cy="744" r="7.800" fill="#68a518"/><circle cx="1147" cy="751.500" r="7.800" fill="#68a518"/><circle cx="1143.500" cy="748" r="11" fill="#68a518"/><path d="M1139 748l3 3.500 6-7" fill="none" stroke="#fff" stroke-width="2.500"/><circle cx="1150" cy="755" r="4.200" fill="#e22" stroke="#fff"/></svg></button>
    <button aria-label="Clipboard"><svg class="w-[23px]" viewBox="1160 727 23 41"><path d="M1165 743h12v12h-12z" fill="none" stroke="#e8e8e8" stroke-width="2"/><path d="M1168 743v-2h6v2M1171 745v5M1171 751.500v2" stroke="#e8e8e8" stroke-width="2" fill="none"/></svg></button>
    <button aria-label="Updates"><svg class="w-[27px]" viewBox="1183 727 27 41"><path d="M1188 743c3 0 5-1 7-2.500c2 1.500 4 2.500 7 2.500c0 6-2 10-7 13c-5-3-7-7-7-13z" fill="#444" stroke="#ddd" stroke-width="1.500"/><path d="M1195 743c-2 1-3 1.500-5 1.500c.5 4 2 7 5 9z" fill="#ddd"/><circle cx="1200.500" cy="753" r="3" fill="#e0703a"/></svg></button>
    <button aria-label="Notifications"><svg class="w-[25px]" viewBox="1210 727 25 41"><path d="M1215 750l6-2 1-5 3-2 3 7-2 5-1 1.500z" fill="#ddd"/><circle cx="1226.500" cy="744" r="3.200" fill="#eee"/><path d="M1219 753.500l3 2" stroke="#ddd" stroke-width="2"/></svg></button>
    <span class="w-[15px]">1</span>
    <button aria-label="Printer"><svg class="w-5" viewBox="1250 727 20 41"><path d="M1255 741h10v3h-10zM1253 745h14v6h-2.500v-2h-9v2h-2.500zM1257 750.500h6v4h-6z" fill="#e8e8e8"/></svg></button>
    <button aria-label="Network"><svg class="w-[30px]" viewBox="1270 727 30 41"><path d="M1283 741h5v5h-5zM1278 751h5v5h-5zM1288 751h5v5h-5z" fill="#e8e8e8"/><path d="M1280.500 751v-2.500h10v2.500M1285.500 746v3" stroke="#e8e8e8" fill="none"/></svg></button>
    <button aria-label="Volume muted"><svg class="w-[29px]" viewBox="1300 727 29 41"><path d="M1304 745.500h3l4-4v13l-4-4h-3z" fill="#e8e8e8"/><path d="M1312.500 744c1.500 3 1.500 5 0 8M1315 742.500c2 4 2 7 0 11M1318 741c2 4 2 6 1 9" stroke="#777" fill="none"/><path d="M1315 751l4.500 4.500m0-4.500l-4.500 4.500" stroke="#e8e8e8" stroke-width="1.500"/></svg></button>
    <time class="w-[39px]">19:06</time>
  </div>
</div>

<script>
const headCell = 'border-r border-b border-[#2c2c2c] p-0 text-center font-normal font-[Noto_Sans] text-[12px] leading-[14px] ';
const headPlain = headCell + 'bg-[#f4f4f4]';
const headActive = headCell + 'bg-[#92b372] text-white';
const gridCell = 'border border-[#bfbfbf] p-0';
const thin = 'border border-black p-0 whitespace-nowrap ';
const thick = 'border-[3px] border-black p-0 ';
const title = thick + 'bg-[#92d050] text-center text-[18px] font-bold leading-[21px]';
const timeMark = thick + 'border-l bg-[#fcd5b4] text-center text-[18px] font-bold';
const timeFill = thick + 'bg-[#fcd5b4]';
const heights = {1:'h-[24px]',2:'h-[50px]',3:'h-[25px]',19:'h-[24px]',20:'h-[25px]'};
const A = 'angular and node\u00a0', T = 'Portfolio admin panel using angular';
const data = {
  4:['09.30 AM','10.00 AM',A,T,'0.5','0.5','ONGOING'],
  5:['10.00 AM','11.00 AM',A,T,'1','1','ONGOING'],
  6:['11.00 PM','12.00 PM',A,T,'1','1','ONGOING'],
  7:['12.00 PM','01.00 PM',A,T,'1','1','ONGOING'],
  8:['01.00 PM','01.40 PM','','Lunch Break','','',''],
  9:['01.40 PM','03.00 PM',A,T,'1.20 min','1.20 min','ONGOING'],
  10:['03.00 PM','04.00 PM',A,T,'1','1','ONGOING'],
  11:['04.00 PM','05.15 PM',A,T,'1','1','ONGOING'],
  12:['05.20 PM','05.40 PM','','Tea Break','','',''],
  13:['05.40 PM','06.00 PM',A,T,'1','1','ONGOING'],
  14:['06.00 PM','07.00 PM',A,T,'1','1','FBD']
};
const titles = ['START TIME','END TIME','ENTITY NAME','TASKS (In Detail)','Estimated Hours','Actual Hours','STATUS'];
const align = ['text-center','text-center','text-center','text-left pl-px','text-left pl-px','text-left pl-px','text-center'];

document.getElementById('cols').innerHTML = '<tr class="h-[16px]">' +
  ['','C','D','E','F','G','H','I','J',''].map((c, i) => `<th scope="col" class="${c === 'F' ? headActive : headPlain}${i === 9 ? ' border-r-0' : ''}">${c === 'F' ? '<b>F</b>' : c}</th>`).join('') + '</tr>';

let html = '';
for (let r = 1; r <= 21; r++) {
  let cells;
  let tail = `<td class="${gridCell}"></td><td class="${gridCell} border-r-0"></td>`;
  if (r === 1) {
    cells = `<td class="${gridCell}"></td>`.repeat(7);
  } else if (r === 2) {
    cells = titles.map((t, i) => `<td class="${title} ${i === 0 ? 'border-l' : ''}">${t}</td>`).join('');
    tail = `<td class="${gridCell} border-b-black"></td><td class="${gridCell} border-r-0 border-b-black"></td>`;
  } else if (r === 3 || r === 20) {
    cells = `<td colspan="2" class="${timeMark}">${r === 3 ? '09.20 AM' : '07.10 PM'}</td><td colspan="5" class="${timeFill}"></td>`;
  } else if (r === 21) {
    cells = '<td colspan="8"></td>';
    tail = '<td class="border-l border-[#bfbfbf]"></td>';
  } else {
    const brk = r === 8 || r === 12;
    cells = (data[r] || Array(7).fill('')).map((t, i) => {
      const sel = r === 7 && i === 3;
      return `<td class="${thin}${align[i]}${brk ? ' border-y-[3px] bg-[#a6a6a6] font-bold' : ''}${i === 6 ? ' border-r-[3px]' : ''}${sel ? ' relative' : ''}">${t}${sel ? '<span class="absolute -inset-px border-2 border-black"></span><span class="absolute -right-[3px] -bottom-[3px] size-[5px] bg-black"></span>' : ''}</td>`;
    }).join('');
  }
  html += `<tr class="${heights[r] || 'h-[21px]'}"><th scope="row" class="${r === 7 ? headActive : headPlain}${r === 2 ? ' border-b-black' : ''}">${r === 7 ? '<b>7</b>' : r}</th>${cells}${tail}</tr>`;
}
document.getElementById('rows').innerHTML = html;
</script>
</body>
</html>
